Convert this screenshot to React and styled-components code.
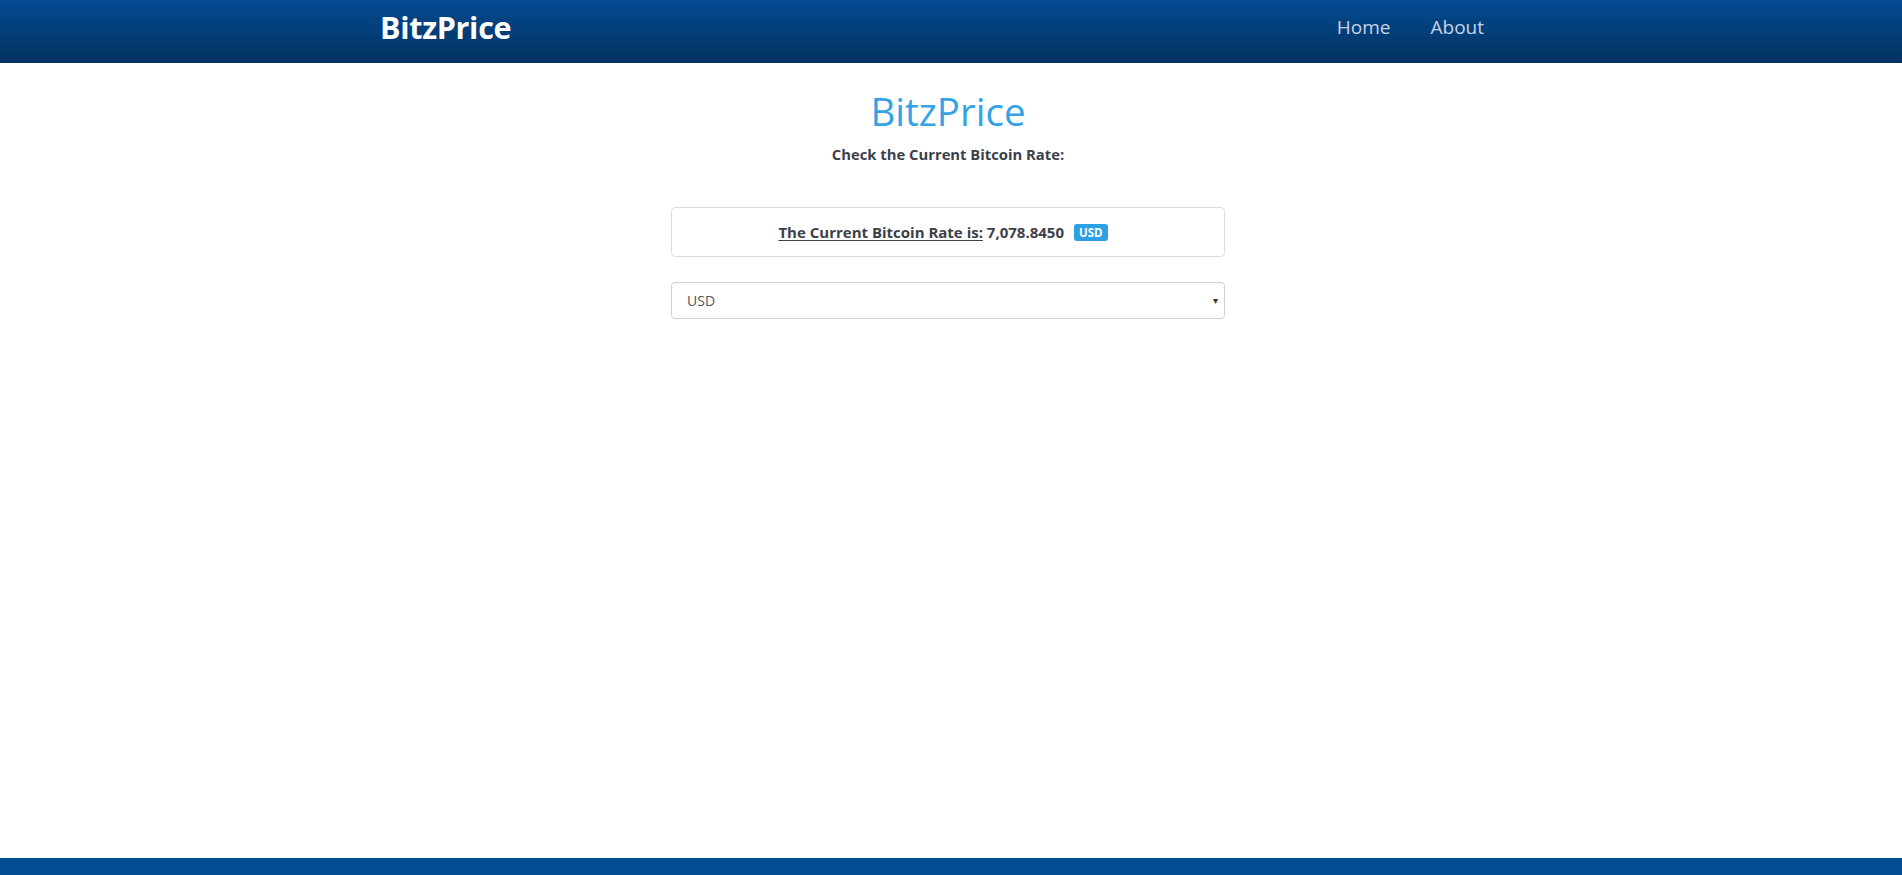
import React from 'react'
import styled, { createGlobalStyle } from 'styled-components'

const GlobalStyle = createGlobalStyle`
  html, body {
    margin: 0;
    padding: 0;
    background: #fff;
  }
  body {
    font-family: "Open Sans", "Noto Sans", sans-serif;
    color: #3c4049;
  }
  * {
    box-sizing: border-box;
  }
`

const Page = styled.div`
  min-height: 100vh;
  display: flex;
  flex-direction: column;
`

const Navbar = styled.nav`
  height: 63px;
  background: linear-gradient(to bottom, #044b91 0%, #023261 100%);
`

const NavInner = styled.div`
  width: 1170px;
  height: 100%;
  margin: 0 auto;
  padding: 0 15px 0 14px;
  display: flex;
  align-items: center;
  justify-content: space-between;
`

const Brand = styled.a`
  color: #fff;
  font-size: 30.5px;
  font-weight: 700;
  letter-spacing: -0.3px;
  text-decoration: none;
  margin-top: -9px;
`

const NavLinks = styled.ul`
  list-style: none;
  margin: -10px 17px 0 0;
  padding: 0;
  display: flex;
`

const NavLink = styled.li`
  a {
    display: block;
    padding: 0 20px;
    color: #c7d4e5;
    font-size: 19px;
    text-decoration: none;
  }
`

const Main = styled.main`
  flex: 1;
  display: flex;
  flex-direction: column;
  align-items: center;
  padding-right: 6px;
`

const Title = styled.h1`
  margin: 27px 0 0;
  font-size: 38.5px;
  font-weight: 400;
  line-height: 1.1;
  color: #34a3e6;
`

const Subtitle = styled.h5`
  margin: 12px 0 0;
  font-size: 14.8px;
  font-weight: 700;
  color: #3c4049;
`

const RateBox = styled.div`
  width: 554px;
  height: 50px;
  margin-top: 43px;
  border: 1px solid #dddddd;
  border-radius: 4px;
  display: flex;
  align-items: center;
  justify-content: center;
  padding-right: 10px;
  font-size: 15px;
  font-weight: 700;
`

const RateLabel = styled.span`
  text-decoration: underline;
  text-underline-offset: 2px;
`

const Badge = styled.span`
  display: inline-block;
  margin-left: 10px;
  padding: 2px 5px;
  background: #2d9fe3;
  color: #fff;
  font-size: 11.5px;
  font-weight: 700;
  line-height: 13px;
  border-radius: 3px;
`

const SelectWrap = styled.div`
  position: relative;
  width: 554px;
  margin-top: 25px;
`

const Select = styled.select`
  width: 100%;
  height: 37px;
  padding: 0 15px;
  border: 1px solid #cfcfd4;
  border-radius: 4px;
  background: #fff;
  color: #555;
  font-family: "Open Sans", "Noto Sans", sans-serif;
  font-size: 14px;
  appearance: none;
  outline: none;
`

const Arrow = styled.span`
  position: absolute;
  right: 7px;
  top: 11px;
  font-size: 10px;
  color: #333;
  pointer-events: none;
`

const Footer = styled.footer`
  height: 17px;
  background: #034d92;
`

const App = () => {
  return (
    <Page>
      <GlobalStyle />
      <Navbar>
        <NavInner>
          <Brand href="#">BitzPrice</Brand>
          <NavLinks>
            <NavLink><a href="#">Home</a></NavLink>
            <NavLink><a href="#">About</a></NavLink>
          </NavLinks>
        </NavInner>
      </Navbar>
      <Main>
        <Title>BitzPrice</Title>
        <Subtitle>Check the Current Bitcoin Rate:</Subtitle>
        <RateBox>
          <RateLabel>The Current Bitcoin Rate is:</RateLabel>&nbsp;7,078.8450
          <Badge>USD</Badge>
        </RateBox>
        <SelectWrap>
          <Select defaultValue="USD">
            <option value="USD">USD</option>
            <option value="EUR">EUR</option>
            <option value="GBP">GBP</option>
          </Select>
          <Arrow>▾</Arrow>
        </SelectWrap>
      </Main>
      <Footer />
    </Page>
  )
}

export default App
